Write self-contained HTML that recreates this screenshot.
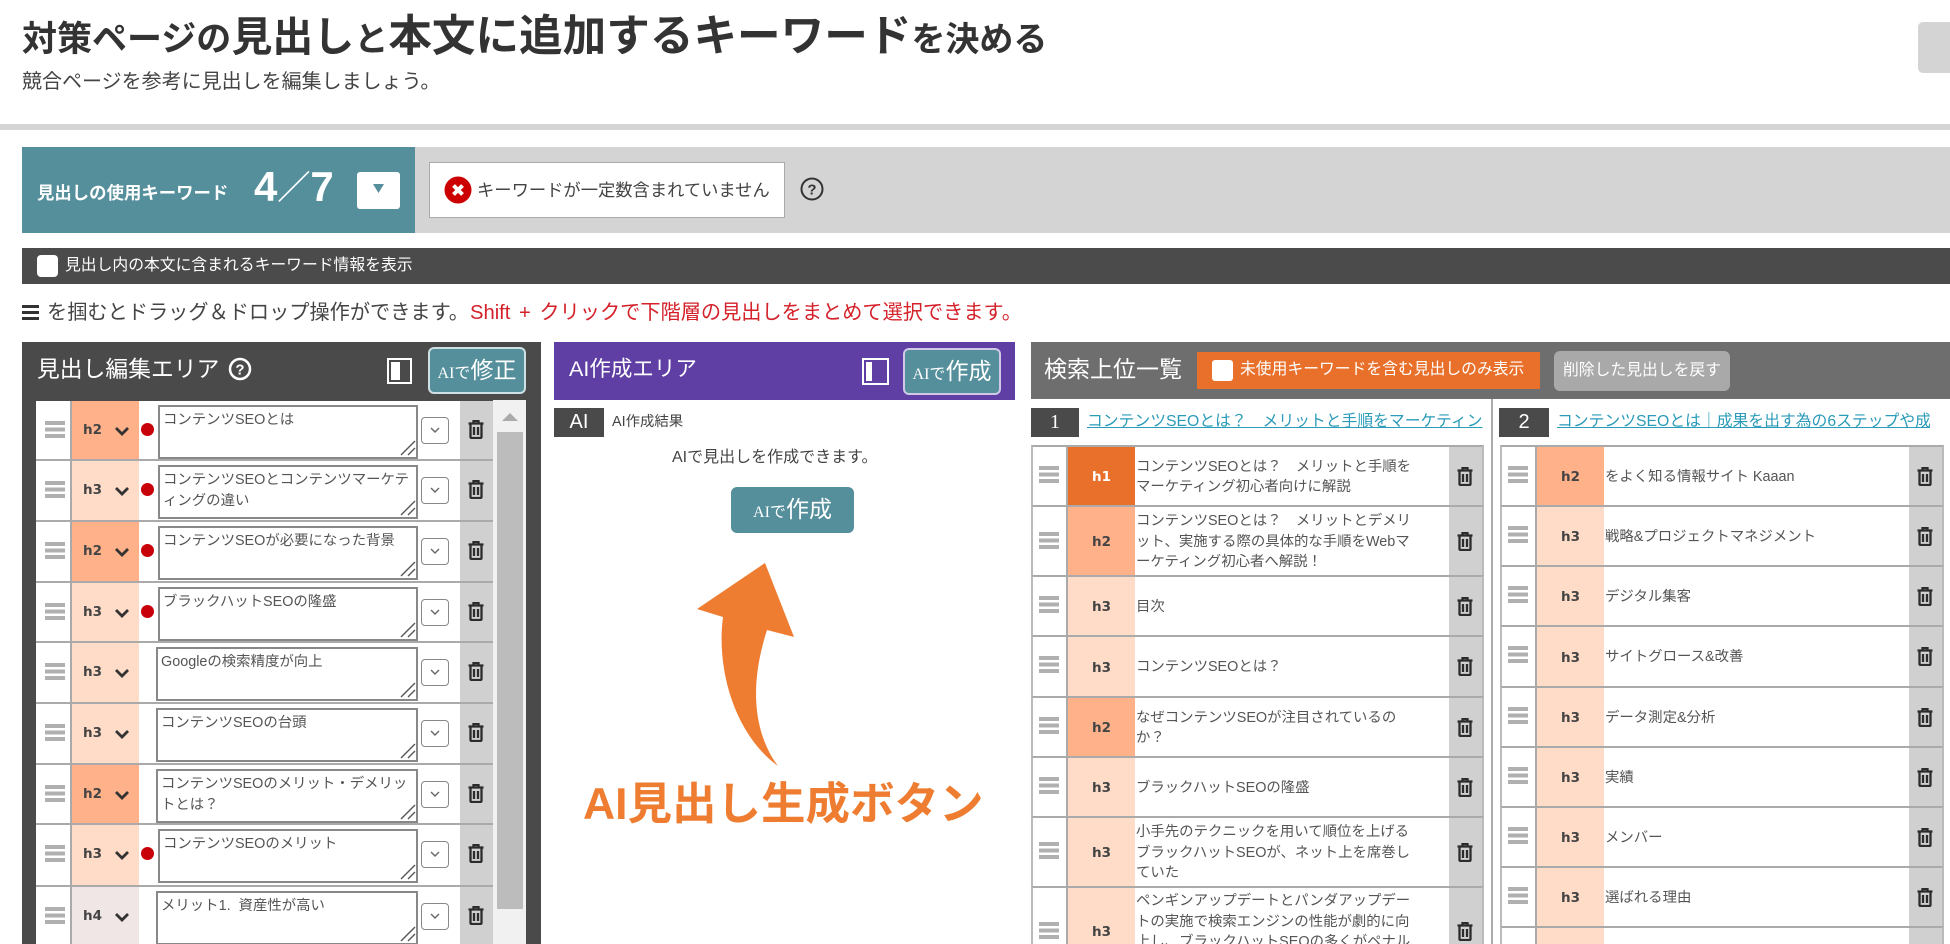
<!DOCTYPE html>
<html lang="ja"><head><meta charset="utf-8"><title>見出し編集</title>
<style>
html,body{margin:0;padding:0;width:1950px;height:944px;overflow:hidden;background:#fff}
body{position:relative;font-family:"Liberation Sans","Noto Sans CJK JP",sans-serif;color:#444}
div,span{white-space:nowrap}
.abs{position:absolute}
.r{position:absolute;left:36px;width:457px;height:64px;background:#fff;border-top:2px solid #aaa;overflow:hidden}
.r>*{position:absolute}
.r .hd{left:9px;top:20px;width:20px;height:17px}
.r .ln{left:34px;top:0;width:2px;height:64px;background:#aaa}
.r .tg{left:36px;top:0;width:67px;height:64px}
.r .h{left:47px;top:19px;font:bold 13.5px/20px "DejaVu Sans",sans-serif;color:#444}
.r .ch{left:78px;top:25px;width:16px;height:11px}
.r .dt{left:105px;top:22px;width:13px;height:13px;border-radius:50%;background:#c8000a}
.r .ta{left:122px;top:4px;width:253px;height:47px;border:2px solid #888;background:#fff;padding:3px 0 0 3px;font-size:14.4px;line-height:20.5px;color:#555;box-sizing:content-box}
.r .ta.n{left:120px;width:255px}
.r .gr{left:364px;top:39px;width:16px;height:16px}
.r .sb{left:385px;top:16px;width:26px;height:25px;border:1.5px solid #888;border-radius:4px;background:#fff}
.r .del{left:424px;top:0;width:33px;height:64px;background:#d0d0d0}
.r .tr{left:432px;top:19px;width:16px;height:19px}
.q{position:absolute;background:#fff;border-top:2px solid #aaa;border-left:2px solid #bbb;border-right:2px solid #bbb;box-sizing:border-box;overflow:hidden}
.q>*{position:absolute}
.c1{left:1031px;width:453px}
.c2{left:1500px;width:444px}
.q .hd{left:6px;width:20px;height:17px;margin-top:-1px}
.q .ln{left:33px;top:0;width:2px;height:100%;background:#aaa}
.q .tg{left:35px;top:0;width:67px;height:100%;text-align:center;font:bold 13.5px "DejaVu Sans",sans-serif;color:#444;display:flex;align-items:center;justify-content:center}
.q .tx{left:103px;top:0;height:100%;display:flex;align-items:center;font-size:14.4px;line-height:20.5px;color:#555}
.q .del{right:0;top:0;width:33px;height:100%;background:#d0d0d0}
.q .tr{right:9px;width:16px;height:19px}
.h1{background:#e8702a;color:#fff!important}
.h2{background:#ffb28a}
.h3{background:#ffdcc8}
.h4{background:#f0e6e6}
.btn{position:absolute;background:#548f9b;color:#fff;text-align:center;box-sizing:border-box;border-radius:6px;font-family:"Liberation Serif","Noto Sans CJK JP",serif}
.link{position:absolute;color:#2a9bb8;font-size:15.8px;line-height:24px;text-decoration:underline}
.num{position:absolute;background:#4a4a4a;color:#fff;text-align:center}
</style></head><body>
<svg width="0" height="0" style="position:absolute">
<symbol id="hd" viewBox="0 0 20 17"><path d="M0 0h20v4H0zM0 6.500h20v4H0zM0 13h20v4H0z" fill="#b0b0b0"/></symbol>
<symbol id="tr" viewBox="0 0 16 19"><path d="M.5 3.500h15M5.500 3V1h5v2M2.500 4v13a1 1 0 0 0 1 1h9a1 1 0 0 0 1-1V4M6 7v8M10 7v8" fill="none" stroke="#2c2c2c" stroke-width="2.300"/></symbol>
<symbol id="ch" viewBox="0 0 16 11"><path d="M2 2l6 6 6-6" fill="none" stroke="#333" stroke-width="2.800"/></symbol>
<symbol id="sc" viewBox="0 0 26 25"><path d="M9 10l4 4 4-4" fill="none" stroke="#666" stroke-width="1.400"/></symbol>
<symbol id="gr" viewBox="0 0 16 16"><path d="M1 15L15 1M8 15l7-7" fill="none" stroke="#555" stroke-width="1.400"/></symbol>
</svg>

<!-- title -->
<div class="abs" style="left:22px;top:10px;height:54px;line-height:54px;font-weight:bold;color:#333;font-size:35px">対策ページの<span style="font-size:41px">見出し</span><span style="font-size:34px">と</span><span style="font-size:43.600px">本文に追加するキーワード</span><span style="font-size:34px">を決める</span></div>
<div class="abs" style="left:22px;top:67px;font-size:20px;line-height:30px;color:#444">競合ページを参考に見出しを編集しましょう。</div>
<div class="abs" style="left:1918px;top:22px;width:40px;height:51px;background:#d4d4d4;border-radius:5px"></div>
<div class="abs" style="left:0;top:124px;width:1950px;height:6px;background:#d4d4d4"></div>

<!-- keyword bar -->
<div class="abs" style="left:22px;top:147px;width:1928px;height:86px;background:#d4d4d4"></div>
<div class="abs" style="left:22px;top:147px;width:393px;height:86px;background:#548f9b"></div>
<div class="abs" style="left:37px;top:180px;font-size:17.400px;line-height:26px;font-weight:bold;color:#fff">見出しの使用キーワード</div>
<div class="abs" style="left:254px;top:162px;font-size:42px;line-height:50px;font-weight:bold;color:#fff">4<span style="font-size:33px;position:relative;top:-2px">／</span>7</div>
<div class="abs" style="left:357px;top:172px;width:43px;height:37px;background:#fff;border-radius:3px"></div>
<svg class="abs" style="left:373px;top:184px" width="11" height="9"><path d="M0 0h11L5.500 9z" fill="#548f9b"/></svg>
<div class="abs" style="left:429px;top:162px;width:356px;height:56px;background:#fff;border:1px solid #aaa;box-sizing:border-box"></div>
<svg class="abs" style="left:444px;top:176px" width="28" height="28"><circle cx="14" cy="14" r="13.500" fill="#cc0000"/><path d="M9.500 9.500l9 9M18.500 9.500l-9 9" stroke="#fff" stroke-width="4"/></svg>
<div class="abs" style="left:477px;top:177px;font-size:17.300px;line-height:26px;color:#444">キーワードが一定数含まれていません</div>
<svg class="abs" style="left:800px;top:177px" width="24" height="24"><circle cx="12" cy="12" r="10.500" fill="none" stroke="#333" stroke-width="2"/><text x="12" y="17.500" text-anchor="middle" font-family="Liberation Sans" font-weight="bold" font-size="15" fill="#333">?</text></svg>

<!-- dark bar -->
<div class="abs" style="left:22px;top:248px;width:1928px;height:36px;background:#4b4b4b"></div>
<div class="abs" style="left:37px;top:255px;width:21px;height:22px;background:#fff;border-radius:4px"></div>
<div class="abs" style="left:65px;top:254px;font-size:15.800px;line-height:24px;color:#fff">見出し内の本文に含まれるキーワード情報を表示</div>

<!-- instruction -->
<svg class="abs" style="left:22px;top:305px" width="17" height="15"><path d="M0 0h17v3H0zM0 6h17v3H0zM0 12h17v3H0z" fill="#333"/></svg>
<div class="abs" style="left:47px;top:298px;font-size:20.200px;line-height:30px;color:#444">を掴むとドラッグ＆ドロップ操作ができます。</div>
<div class="abs" style="left:470px;top:298px;font-size:20.200px;line-height:30px;color:#d4212a;word-spacing:3px">Shift + クリックで下階層の見出しをまとめて選択できます。</div>

<!-- left panel -->
<div class="abs" style="left:22px;top:342px;width:519px;height:602px;background:#4a4a4a"></div>
<div class="abs" style="left:37px;top:352px;font-size:22.800px;line-height:34px;color:#fff">見出し編集エリア</div>
<svg class="abs" style="left:228px;top:357px" width="24" height="24"><circle cx="12" cy="12" r="10" fill="none" stroke="#fff" stroke-width="2.500"/><text x="12" y="17.500" text-anchor="middle" font-family="Liberation Sans" font-weight="bold" font-size="15" fill="#fff">?</text></svg>
<div class="abs" style="left:387px;top:358px;width:25px;height:26px;border:2px solid #fff;box-sizing:border-box"><div class="abs" style="left:2px;top:2px;width:9px;height:18px;background:#fff"></div></div>
<div class="btn" style="left:428px;top:347px;width:98px;height:47px;border:2px solid #cfe0e4;line-height:43px;font-size:16px">AIで<span style="font-size:23px;font-family:'Liberation Sans','Noto Sans CJK JP',sans-serif">修正</span></div>

<div class="abs" style="left:492px;top:400px;width:34px;height:544px;background:#f1f1f1"></div>
<svg class="abs" style="left:502px;top:413px" width="16" height="8"><path d="M0 8h16L8 0z" fill="#aaa"/></svg>
<div class="abs" style="left:497px;top:432px;width:26px;height:477px;background:#bcbcbc"></div>

<div class="r" style="top:399px;border-top-color:#4a4a4a"><svg class="hd"><use href="#hd"/></svg><i class="ln"></i><i class="tg h2"></i><span class="h">h2</span><svg class="ch"><use href="#ch"/></svg><i class="dt"></i><div class="ta">コンテンツSEOとは</div><svg class="gr"><use href="#gr"/></svg><svg class="sb"><use href="#sc"/></svg><i class="del"></i><svg class="tr"><use href="#tr"/></svg></div>
<div class="r" style="top:459px"><svg class="hd"><use href="#hd"/></svg><i class="ln"></i><i class="tg h3"></i><span class="h">h3</span><svg class="ch"><use href="#ch"/></svg><i class="dt"></i><div class="ta">コンテンツSEOとコンテンツマーケテ<br>ィングの違い</div><svg class="gr"><use href="#gr"/></svg><svg class="sb"><use href="#sc"/></svg><i class="del"></i><svg class="tr"><use href="#tr"/></svg></div>
<div class="r" style="top:520px"><svg class="hd"><use href="#hd"/></svg><i class="ln"></i><i class="tg h2"></i><span class="h">h2</span><svg class="ch"><use href="#ch"/></svg><i class="dt"></i><div class="ta">コンテンツSEOが必要になった背景</div><svg class="gr"><use href="#gr"/></svg><svg class="sb"><use href="#sc"/></svg><i class="del"></i><svg class="tr"><use href="#tr"/></svg></div>
<div class="r" style="top:581px"><svg class="hd"><use href="#hd"/></svg><i class="ln"></i><i class="tg h3"></i><span class="h">h3</span><svg class="ch"><use href="#ch"/></svg><i class="dt"></i><div class="ta">ブラックハットSEOの隆盛</div><svg class="gr"><use href="#gr"/></svg><svg class="sb"><use href="#sc"/></svg><i class="del"></i><svg class="tr"><use href="#tr"/></svg></div>
<div class="r" style="top:641px"><svg class="hd"><use href="#hd"/></svg><i class="ln"></i><i class="tg h3"></i><span class="h">h3</span><svg class="ch"><use href="#ch"/></svg><div class="ta n">Googleの検索精度が向上</div><svg class="gr"><use href="#gr"/></svg><svg class="sb"><use href="#sc"/></svg><i class="del"></i><svg class="tr"><use href="#tr"/></svg></div>
<div class="r" style="top:702px"><svg class="hd"><use href="#hd"/></svg><i class="ln"></i><i class="tg h3"></i><span class="h">h3</span><svg class="ch"><use href="#ch"/></svg><div class="ta n">コンテンツSEOの台頭</div><svg class="gr"><use href="#gr"/></svg><svg class="sb"><use href="#sc"/></svg><i class="del"></i><svg class="tr"><use href="#tr"/></svg></div>
<div class="r" style="top:763px"><svg class="hd"><use href="#hd"/></svg><i class="ln"></i><i class="tg h2"></i><span class="h">h2</span><svg class="ch"><use href="#ch"/></svg><div class="ta n">コンテンツSEOのメリット・デメリッ<br>トとは？</div><svg class="gr"><use href="#gr"/></svg><svg class="sb"><use href="#sc"/></svg><i class="del"></i><svg class="tr"><use href="#tr"/></svg></div>
<div class="r" style="top:823px"><svg class="hd"><use href="#hd"/></svg><i class="ln"></i><i class="tg h3"></i><span class="h">h3</span><svg class="ch"><use href="#ch"/></svg><i class="dt"></i><div class="ta">コンテンツSEOのメリット</div><svg class="gr"><use href="#gr"/></svg><svg class="sb"><use href="#sc"/></svg><i class="del"></i><svg class="tr"><use href="#tr"/></svg></div>
<div class="r" style="top:885px"><svg class="hd"><use href="#hd"/></svg><i class="ln"></i><i class="tg h4"></i><span class="h">h4</span><svg class="ch"><use href="#ch"/></svg><div class="ta n">メリット1.&nbsp; 資産性が高い</div><svg class="gr"><use href="#gr"/></svg><svg class="sb"><use href="#sc"/></svg><i class="del"></i><svg class="tr"><use href="#tr"/></svg></div>

<!-- middle panel -->
<div class="abs" style="left:554px;top:342px;width:461px;height:58px;background:#5f3fa4"></div>
<div class="abs" style="left:569px;top:353px;font-size:21.500px;line-height:32px;color:#fff">AI作成エリア</div>
<div class="abs" style="left:862px;top:358px;width:27px;height:27px;border:2px solid #fff;box-sizing:border-box"><div class="abs" style="left:2px;top:2px;width:6px;height:19px;background:#fff"></div></div>
<div class="btn" style="left:903px;top:348px;width:98px;height:47px;border:2px solid #cfc8e6;line-height:43px;font-size:16px">AIで<span style="font-size:23px;font-family:'Liberation Sans','Noto Sans CJK JP',sans-serif">作成</span></div>
<div class="num" style="left:554px;top:408px;width:50px;height:29px;line-height:29px;font-size:20px">AI</div>
<div class="abs" style="left:612px;top:411px;font-size:14.400px;line-height:22px;color:#444">AI作成結果</div>
<div class="abs" style="left:672px;top:446px;font-size:16px;line-height:24px;color:#444">AIで見出しを作成できます。</div>
<div class="btn" style="left:731px;top:487px;width:123px;height:46px;line-height:44px;font-size:16px">AIで<span style="font-size:23px;font-family:'Liberation Sans','Noto Sans CJK JP',sans-serif">作成</span></div>
<svg class="abs" style="left:0;top:0" width="1950" height="944"><path d="M765 563L697 609L723 617C716 670 735 735 778 766C755 735 748 689 767 630L794 637Z" fill="#ee7d31"/></svg>
<div class="abs" style="left:583px;top:773px;font-size:44.500px;line-height:64px;font-weight:bold;color:#ee7d31">AI見出し生成ボタン</div>

<!-- right panel -->
<div class="abs" style="left:1031px;top:342px;width:919px;height:57px;background:#6e6e6e"></div>
<div class="abs" style="left:1044px;top:352px;font-size:23px;line-height:34px;color:#fff">検索上位一覧</div>
<div class="abs" style="left:1197px;top:352px;width:343px;height:37px;background:#e8702a"></div>
<div class="abs" style="left:1212px;top:360px;width:21px;height:21px;background:#fff;border-radius:3px"></div>
<div class="abs" style="left:1240px;top:358px;font-size:15.800px;line-height:24px;color:#fff">未使用キーワードを含む見出しのみ表示</div>
<div class="abs" style="left:1554px;top:351px;width:176px;height:40px;background:#a9a9a9;border-radius:6px;color:#fff;font-size:15.800px;line-height:40px;text-align:center">削除した見出しを戻す</div>

<div class="abs" style="left:1491px;top:399px;width:2px;height:545px;background:#aaa"></div>

<div class="num" style="left:1031px;top:408px;width:48px;height:29px;line-height:29px;font-size:20px;font-family:'Liberation Serif',serif">1</div>
<div class="link" style="left:1087px;top:410px;width:396px;overflow:hidden">コンテンツSEOとは？　メリットと手順をマーケティン</div>
<div class="num" style="left:1499px;top:408px;width:50px;height:29px;line-height:29px;font-size:20px">2</div>
<div class="link" style="left:1557px;top:410px;width:373px;overflow:hidden">コンテンツSEOとは｜成果を出す為の6ステップや成</div>

<!-- col 1 -->
<div class="q c1" style="top:445px;height:62px"><svg class="hd" style="top:20px"><use href="#hd"/></svg><i class="ln"></i><div class="tg h1">h1</div><div class="tx"><span>コンテンツSEOとは？　メリットと手順を<br>マーケティング初心者向けに解説</span></div><i class="del"></i><svg class="tr" style="top:20px"><use href="#tr"/></svg></div>
<div class="q c1" style="top:505px;height:72px"><svg class="hd" style="top:26px"><use href="#hd"/></svg><i class="ln"></i><div class="tg h2">h2</div><div class="tx"><span>コンテンツSEOとは？　メリットとデメリ<br>ット、実施する際の具体的な手順をWebマ<br>ーケティング初心者へ解説！</span></div><i class="del"></i><svg class="tr" style="top:25px"><use href="#tr"/></svg></div>
<div class="q c1" style="top:575px;height:62px"><svg class="hd" style="top:20px"><use href="#hd"/></svg><i class="ln"></i><div class="tg h3">h3</div><div class="tx"><span>目次</span></div><i class="del"></i><svg class="tr" style="top:20px"><use href="#tr"/></svg></div>
<div class="q c1" style="top:635px;height:63px"><svg class="hd" style="top:20px"><use href="#hd"/></svg><i class="ln"></i><div class="tg h3">h3</div><div class="tx"><span>コンテンツSEOとは？</span></div><i class="del"></i><svg class="tr" style="top:20px"><use href="#tr"/></svg></div>
<div class="q c1" style="top:696px;height:62px"><svg class="hd" style="top:20px"><use href="#hd"/></svg><i class="ln"></i><div class="tg h2">h2</div><div class="tx"><span>なぜコンテンツSEOが注目されているの<br>か？</span></div><i class="del"></i><svg class="tr" style="top:20px"><use href="#tr"/></svg></div>
<div class="q c1" style="top:756px;height:62px"><svg class="hd" style="top:20px"><use href="#hd"/></svg><i class="ln"></i><div class="tg h3">h3</div><div class="tx"><span>ブラックハットSEOの隆盛</span></div><i class="del"></i><svg class="tr" style="top:20px"><use href="#tr"/></svg></div>
<div class="q c1" style="top:816px;height:72px"><svg class="hd" style="top:25px"><use href="#hd"/></svg><i class="ln"></i><div class="tg h3">h3</div><div class="tx"><span>小手先のテクニックを用いて順位を上げる<br>ブラックハットSEOが、ネット上を席巻し<br>ていた</span></div><i class="del"></i><svg class="tr" style="top:25px"><use href="#tr"/></svg></div>
<div class="q c1" style="top:886px;height:90px"><svg class="hd" style="top:35px"><use href="#hd"/></svg><i class="ln"></i><div class="tg h3">h3</div><div class="tx"><span>ペンギンアップデートとパンダアップデー<br>トの実施で検索エンジンの性能が劇的に向<br>上し、ブラックハットSEOの多くがペナル<br>ティを受けた</span></div><i class="del"></i><svg class="tr" style="top:34px"><use href="#tr"/></svg></div>

<!-- col 2 -->
<div class="q c2" style="top:445px;height:62px"><svg class="hd" style="top:20px"><use href="#hd"/></svg><i class="ln"></i><div class="tg h2">h2</div><div class="tx"><span>をよく知る情報サイト Kaaan</span></div><i class="del"></i><svg class="tr" style="top:20px"><use href="#tr"/></svg></div>
<div class="q c2" style="top:505px;height:62px"><svg class="hd" style="top:20px"><use href="#hd"/></svg><i class="ln"></i><div class="tg h3">h3</div><div class="tx"><span>戦略&amp;プロジェクトマネジメント</span></div><i class="del"></i><svg class="tr" style="top:20px"><use href="#tr"/></svg></div>
<div class="q c2" style="top:565px;height:62px"><svg class="hd" style="top:20px"><use href="#hd"/></svg><i class="ln"></i><div class="tg h3">h3</div><div class="tx"><span>デジタル集客</span></div><i class="del"></i><svg class="tr" style="top:20px"><use href="#tr"/></svg></div>
<div class="q c2" style="top:625px;height:63px"><svg class="hd" style="top:20px"><use href="#hd"/></svg><i class="ln"></i><div class="tg h3">h3</div><div class="tx"><span>サイトグロース&amp;改善</span></div><i class="del"></i><svg class="tr" style="top:20px"><use href="#tr"/></svg></div>
<div class="q c2" style="top:686px;height:62px"><svg class="hd" style="top:20px"><use href="#hd"/></svg><i class="ln"></i><div class="tg h3">h3</div><div class="tx"><span>データ測定&amp;分析</span></div><i class="del"></i><svg class="tr" style="top:20px"><use href="#tr"/></svg></div>
<div class="q c2" style="top:746px;height:62px"><svg class="hd" style="top:20px"><use href="#hd"/></svg><i class="ln"></i><div class="tg h3">h3</div><div class="tx"><span>実績</span></div><i class="del"></i><svg class="tr" style="top:20px"><use href="#tr"/></svg></div>
<div class="q c2" style="top:806px;height:62px"><svg class="hd" style="top:20px"><use href="#hd"/></svg><i class="ln"></i><div class="tg h3">h3</div><div class="tx"><span>メンバー</span></div><i class="del"></i><svg class="tr" style="top:20px"><use href="#tr"/></svg></div>
<div class="q c2" style="top:866px;height:62px"><svg class="hd" style="top:20px"><use href="#hd"/></svg><i class="ln"></i><div class="tg h3">h3</div><div class="tx"><span>選ばれる理由</span></div><i class="del"></i><svg class="tr" style="top:20px"><use href="#tr"/></svg></div>
<div class="q c2" style="top:926px;height:62px"><i class="ln"></i><div class="tg h3"></div><i class="del"></i></div>
</body></html>
